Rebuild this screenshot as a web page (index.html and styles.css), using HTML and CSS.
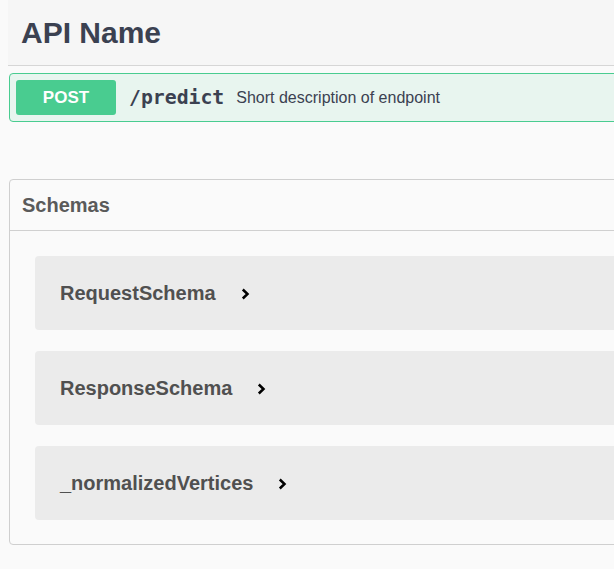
FILE: index.html
```html
<!DOCTYPE html>
<html>
<head>
<meta charset="utf-8">
<link rel="stylesheet" href="styles.css">
</head>
<body>
<div class="page">
  <header class="info">
    <h1 class="title">API Name</h1>
  </header>

  <div class="opblock">
    <span class="method">POST</span>
    <span class="path">/predict</span>
    <span class="summary">Short description of endpoint</span>
  </div>

  <section class="models">
    <h4 class="models-head">Schemas</h4>
    <div class="models-list">
      <div class="model">
        <span class="model-title">RequestSchema</span>
        <svg class="chev" width="9" height="12" viewBox="0 0 9 12"><path d="M1.8 1.5 L6.5 6 L1.8 10.5" fill="none" stroke="#000" stroke-width="2.5"/></svg>
      </div>
      <div class="model">
        <span class="model-title">ResponseSchema</span>
        <svg class="chev" width="9" height="12" viewBox="0 0 9 12"><path d="M1.8 1.5 L6.5 6 L1.8 10.5" fill="none" stroke="#000" stroke-width="2.5"/></svg>
      </div>
      <div class="model">
        <span class="model-title">_normalizedVertices</span>
        <svg class="chev" width="9" height="12" viewBox="0 0 9 12"><path d="M1.8 1.5 L6.5 6 L1.8 10.5" fill="none" stroke="#000" stroke-width="2.5"/></svg>
      </div>
    </div>
  </section>
</div>
</body>
</html>
```

FILE: styles.css
```css
html, body {
  margin: 0;
  padding: 0;
  overflow: hidden;
  background: #fafafa;
}

.page {
  width: 760px;
  font-family: "Liberation Sans", Arial, sans-serif;
}

.info {
  margin-left: 8px;
  height: 65px;
  background: #f6f6f6;
  border-bottom: 1px solid #d6d6d6;
  display: flex;
  align-items: center;
  padding-left: 13px;
}

.title {
  margin: 0;
  font-size: 30px;
  font-weight: 700;
  color: #3b4151;
  position: relative;
  top: 0;
}

.opblock {
  margin: 7px 0 0 9px;
  border: 1px solid #49cc90;
  border-radius: 4px;
  background: #e8f5ef;
  padding: 6px;
  display: flex;
  align-items: center;
}

.method {
  width: 100px;
  height: 35px;
  background: #49cc90;
  border-radius: 3px;
  color: #fff;
  font-weight: 700;
  font-size: 17px;
  display: flex;
  align-items: center;
  justify-content: center;
}

.path {
  margin-left: 13px;
  font-family: "DejaVu Sans Mono", monospace;
  font-weight: 700;
  font-size: 19.8px;
  color: #3b4151;
}

.summary {
  margin-left: 12px;
  font-size: 16px;
  color: #3b4151;
}

.models {
  margin: 57px 0 0 9px;
  border: 1px solid #cfcfcf;
  border-radius: 4px;
  background: #fafafa;
}

.models-head {
  margin: 0;
  height: 50px;
  display: flex;
  align-items: center;
  padding-left: 12px;
  font-size: 20px;
  font-weight: 700;
  color: #5a5a5a;
  border-bottom: 1px solid #d0d0d0;
}

.models-list {
  display: flex;
  flex-direction: column;
  gap: 21px;
  padding: 25px 0 24px 25px;
}

.model {
  height: 74px;
  background: #ebebeb;
  border-radius: 4px;
  display: flex;
  align-items: center;
  padding-left: 25px;
}

.model-title {
  font-size: 20px;
  font-weight: 700;
  color: #505050;
}

.chev {
  margin-left: 25px;
  position: relative;
  top: 1px;
}
```
